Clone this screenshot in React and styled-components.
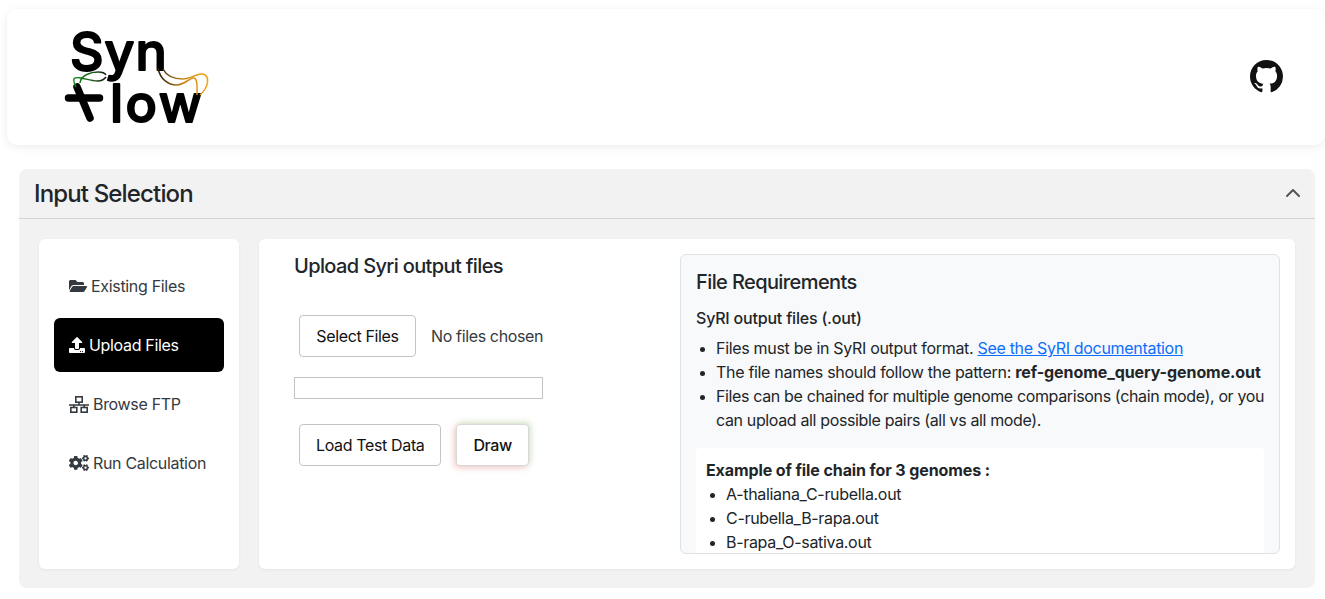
import React from "react";
import styled, { createGlobalStyle } from "styled-components";
import { FaFolderOpen, FaUpload, FaCogs } from "react-icons/fa";
import { BsGithub } from "react-icons/bs";

const GlobalStyle = createGlobalStyle`
  html, body {
    margin: 0;
    padding: 0;
    background: #fff;
    overflow: hidden;
  }
  body {
    font-family: Inter, "Liberation Sans", sans-serif;
    font-size: 16px;
    line-height: 24px;
    color: #212529;
  }
`;

const Page = styled.div`
  width: 1325px;
  height: 599px;
  padding: 9px 0 0 7px;
  box-sizing: border-box;
  overflow: hidden;
`;

const Header = styled.header`
  height: 136px;
  margin-bottom: 24px;
  padding: 0 42px 0 56px;
  border-radius: 10px;
  background: #fff;
  box-shadow: 0 2px 10px rgba(0, 0, 0, 0.08);
  display: flex;
  align-items: center;
  justify-content: space-between;
`;

const GithubLink = styled.a`
  display: flex;
  color: #111;
  font-size: 33px;
  margin-top: -2px;
`;

const Accordion = styled.section`
  width: 1296px;
  height: 419px;
  margin-left: 12px;
  border-radius: 8px;
  background: #f2f2f2;
  display: flex;
  flex-direction: column;
`;

const AccordionHead = styled.div`
  flex: none;
  padding: 0 14px 1px 15px;
  height: 48px;
  border-bottom: 1px solid #d3d3d3;
  display: flex;
  align-items: center;
  justify-content: space-between;
`;

const AccordionTitle = styled.h2`
  margin: 0;
  font-size: 24px;
  font-weight: 500;
  line-height: 29px;
  letter-spacing: -0.85px;
`;

const AccordionBody = styled.div`
  padding: 20px;
  display: flex;
  gap: 20px;
`;

const Card = styled.div`
  height: 330px;
  box-sizing: border-box;
  border-radius: 6px;
  background: #fff;
  box-shadow: 0 1px 3px rgba(0, 0, 0, 0.06);
`;

const Sidebar = styled(Card)`
  width: 200px;
  flex: none;
  padding: 20px 15px;
  display: flex;
  flex-direction: column;
  gap: 5px;
`;

const NavItem = styled.a`
  height: 54px;
  padding: 0 15px;
  border-radius: 6px;
  display: flex;
  align-items: center;
  gap: 4px;
  font-size: 16px;
  letter-spacing: -0.32px;
  color: ${(p) => (p.$active ? "#fff" : "#343a40")};
  background: ${(p) => (p.$active ? "#000" : "transparent")};
  svg {
    font-size: ${(p) => p.$icon}px;
    flex: none;
  }
`;

const Main = styled(Card)`
  flex: 1;
  padding: 15px;
  display: flex;
`;

const UploadColumn = styled.div`
  width: 406px;
  flex: none;
  padding-left: 20px;
  box-sizing: border-box;
`;

const UploadTitle = styled.h3`
  margin: 0 0 37px;
  font-size: 20px;
  font-weight: 500;
  line-height: 24px;
  letter-spacing: -0.63px;
`;

const ButtonRow = styled.div`
  display: flex;
  align-items: center;
  gap: 15px;
  margin-left: 5px;
`;

const Button = styled.button`
  height: 42px;
  padding: 0 16px;
  box-sizing: border-box;
  border: 1px solid #c4c4c4;
  border-radius: 4px;
  background: #fff;
  color: #111;
  font-family: inherit;
  font-size: 16px;
  letter-spacing: -0.36px;
`;

const SelectButton = styled(Button)`
  width: 117px;
  padding: 0;
`;

const DrawButton = styled(Button)`
  font-weight: 500;
  letter-spacing: -0.4px;
  border-color: #d8d8d8;
  box-shadow: -2px 2px 6px rgba(230, 90, 90, 0.3), 2px -2px 6px rgba(110, 190, 90, 0.28);
`;

const FileStatus = styled.span`
  letter-spacing: -0.36px;
  color: #343a40;
`;

const ProgressBar = styled.div`
  width: 249px;
  height: 22px;
  box-sizing: border-box;
  margin: 20px 0 25px;
  border: 1px solid #c4c4c4;
  background: #fff;
`;

const Requirements = styled.aside`
  width: 600px;
  height: 300px;
  flex: none;
  box-sizing: border-box;
  padding: 15px;
  overflow: hidden;
  border: 1px solid #dee2e6;
  border-radius: 6px;
  background: #f8f9fa;
`;

const ReqTitle = styled.h3`
  margin: 0 0 12px;
  font-size: 20px;
  font-weight: 500;
  line-height: 24px;
  letter-spacing: -0.6px;
`;

const ReqSubtitle = styled.h4`
  margin: 0 0 6px;
  font-size: 16px;
  font-weight: 500;
  line-height: 24px;
  letter-spacing: -0.2px;
`;

const List = styled.ul`
  margin: 0 -4px ${(p) => p.$bottom || 0}px 0;
  padding-left: 20px;
  letter-spacing: -0.31px;
  li::marker {
    font-size: 14px;
  }
  strong {
    font-weight: 700;
    letter-spacing: -0.08px;
  }
`;

const TightItem = styled.li`
  letter-spacing: -0.36px;
`;

const Example = styled.div`
  padding: 10px;
  border-radius: 4px;
  background: #fff;
`;

const ExampleTitle = styled.div`
  font-weight: 700;
  letter-spacing: -0.1px;
`;

const DocLink = styled.a`
  color: #0d6efd;
  text-decoration: underline;
`;

const Logo = () => (
  <svg width="150" height="130" viewBox="0 -15 150 130" role="img" aria-label="Syn flow">
    <defs>
      <linearGradient id="flowGreen" gradientUnits="userSpaceOnUse" x1="10" y1="0" x2="44" y2="0">
        <stop offset="0" stopColor="#118a11" />
        <stop offset="0.6" stopColor="#1a5a1a" />
        <stop offset="1" stopColor="#111" />
      </linearGradient>
      <linearGradient id="flowOrange" gradientUnits="userSpaceOnUse" x1="95" y1="0" x2="146" y2="0">
        <stop offset="0" stopColor="#2a1c08" />
        <stop offset="0.5" stopColor="#c98a1a" />
        <stop offset="1" stopColor="#f0a510" />
      </linearGradient>
    </defs>
    <g fontFamily="Inter, sans-serif" fontWeight="500" fill="#000" stroke="#000" strokeWidth="1.8" strokeLinejoin="round">
      <text x="7" y="43" fontSize="52" letterSpacing="1">Syn</text>
      <text x="47" y="95" fontSize="52" letterSpacing="2.5">low</text>
    </g>
    <g fill="none" stroke="#000" strokeWidth="7.5" strokeLinecap="round">
      <path d="M5.5 71H36.5" />
      <path d="M14 60L27 91" />
    </g>
    <g fill="none" strokeWidth="1.5">
      <path d="M13 60C8 50 12 50 18 51C28 53 38 57 43 50" stroke="url(#flowGreen)" />
      <path d="M17 56C18 48 28 45 35 45C40 45 42 46 43 48" stroke="url(#flowGreen)" />
      <path d="M95 41C97 52 105 58 114 58C120 58 126 52 130 51C135 50 134 62 134 68" stroke="url(#flowOrange)" />
      <path d="M100 42C104 50 112 52 120 52C128 52 134 46 140 47C147 49 146 60 137 68" stroke="url(#flowOrange)" />
    </g>
  </svg>
);

const ChevronUp = () => (
  <svg width="16" height="16" viewBox="0 0 16 16" fill="none" stroke="#555" strokeWidth="2" strokeLinecap="round" strokeLinejoin="round">
    <path d="M2 11L8 5L14 11" />
  </svg>
);

const NetworkIcon = () => (
  <svg width="20" height="17" viewBox="0 0 20 17" fill="none" stroke="currentColor" strokeWidth="1.6">
    <rect x="6.8" y="0.8" width="6.4" height="5.4" />
    <path d="M10 6.2V9M0 9H20M4.8 9V11.5M15.2 9V11.5" />
    <rect x="1.8" y="11.5" width="6" height="4.7" />
    <rect x="12.2" y="11.5" width="6" height="4.7" />
  </svg>
);

const App = () => (
  <>
    <GlobalStyle />
    <Page>
      <Header>
        <Logo />
        <GithubLink aria-label="GitHub">
          <BsGithub />
        </GithubLink>
      </Header>
      <Accordion>
        <AccordionHead>
          <AccordionTitle>Input Selection</AccordionTitle>
          <ChevronUp />
        </AccordionHead>
        <AccordionBody>
          <Sidebar>
            <NavItem $icon={18}><FaFolderOpen /> Existing Files</NavItem>
            <NavItem $active $icon={16}><FaUpload /> Upload Files</NavItem>
            <NavItem><NetworkIcon /> Browse FTP</NavItem>
            <NavItem $icon={20}><FaCogs /> Run Calculation</NavItem>
          </Sidebar>
          <Main>
            <UploadColumn>
              <UploadTitle>Upload Syri output files</UploadTitle>
              <ButtonRow>
                <SelectButton>Select Files</SelectButton>
                <FileStatus>No files chosen</FileStatus>
              </ButtonRow>
              <ProgressBar />
              <ButtonRow>
                <Button>Load Test Data</Button>
                <DrawButton>Draw</DrawButton>
              </ButtonRow>
            </UploadColumn>
            <Requirements>
              <ReqTitle>File Requirements</ReqTitle>
              <ReqSubtitle>SyRI output files (.out)</ReqSubtitle>
              <List $bottom={16}>
                <li>Files must be in SyRI output format. <DocLink href="#">See the SyRI documentation</DocLink></li>
                <li>The file names should follow the pattern: <strong>ref-genome_query-genome.out</strong></li>
                <TightItem>Files can be chained for multiple genome comparisons (chain mode), or you can upload all possible pairs (all vs all mode).</TightItem>
              </List>
              <Example>
                <ExampleTitle>Example of file chain for 3 genomes :</ExampleTitle>
                <List>
                  <li>A-thaliana_C-rubella.out</li>
                  <li>C-rubella_B-rapa.out</li>
                  <li>B-rapa_O-sativa.out</li>
                </List>
              </Example>
            </Requirements>
          </Main>
        </AccordionBody>
      </Accordion>
    </Page>
  </>
);

export default App;
